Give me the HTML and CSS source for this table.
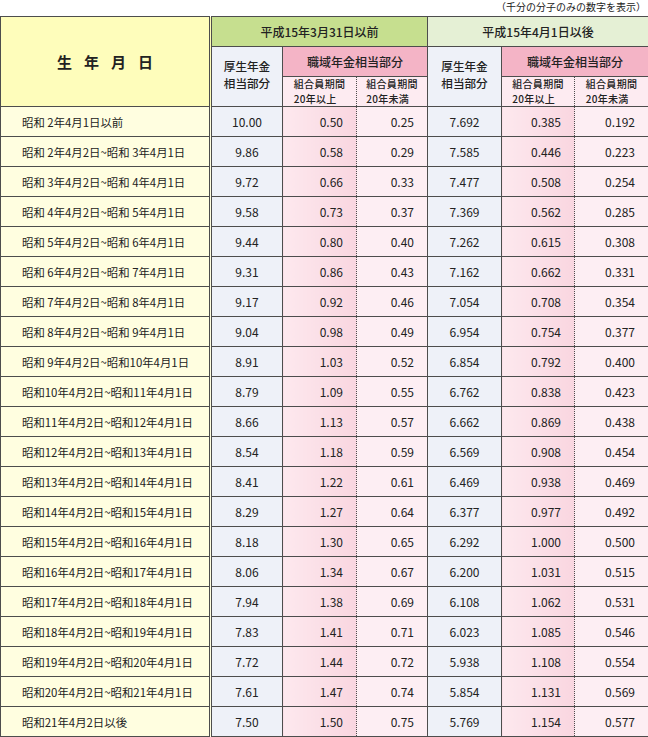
FILE: index.html
```html
<!DOCTYPE html>
<html lang="ja">
<head>
<meta charset="utf-8">
<title>支給率表</title>
<link rel="stylesheet" href="styles.css">
</head>
<body>
<p class="note">（千分の分子のみの数字を表示）</p>
<table class="rates">
<colgroup>
<col class="c-birth"><col class="c-k"><col class="c-a"><col class="c-b"><col class="c-k2"><col class="c-a2"><col class="c-b2">
</colgroup>
<thead>
<tr class="h1">
<th rowspan="3" class="birth">生年月日</th>
<th colspan="3" class="era1">平成15年3月31日以前</th>
<th colspan="3" class="era2">平成15年4月1日以後</th>
</tr>
<tr class="h2">
<th rowspan="2" class="kosei">厚生年金<br>相当部分</th>
<th colspan="2" class="shoku">職域年金相当部分</th>
<th rowspan="2" class="kosei">厚生年金<br>相当部分</th>
<th colspan="2" class="shoku">職域年金相当部分</th>
</tr>
<tr class="h3">
<th class="sub a"><span>組合員期間<br>20年以上</span></th>
<th class="sub b"><span>組合員期間<br>20年未満</span></th>
<th class="sub a"><span>組合員期間<br>20年以上</span></th>
<th class="sub b"><span>組合員期間<br>20年未満</span></th>
</tr>
</thead>
<tbody>
<tr><td class="date">昭和 2年4月1日以前</td><td class="k">10.00</td><td class="a">0.50</td><td class="b">0.25</td><td class="k">7.692</td><td class="a">0.385</td><td class="b">0.192</td></tr>
<tr><td class="date">昭和 2年4月2日~昭和 3年4月1日</td><td class="k">9.86</td><td class="a">0.58</td><td class="b">0.29</td><td class="k">7.585</td><td class="a">0.446</td><td class="b">0.223</td></tr>
<tr><td class="date">昭和 3年4月2日~昭和 4年4月1日</td><td class="k">9.72</td><td class="a">0.66</td><td class="b">0.33</td><td class="k">7.477</td><td class="a">0.508</td><td class="b">0.254</td></tr>
<tr><td class="date">昭和 4年4月2日~昭和 5年4月1日</td><td class="k">9.58</td><td class="a">0.73</td><td class="b">0.37</td><td class="k">7.369</td><td class="a">0.562</td><td class="b">0.285</td></tr>
<tr><td class="date">昭和 5年4月2日~昭和 6年4月1日</td><td class="k">9.44</td><td class="a">0.80</td><td class="b">0.40</td><td class="k">7.262</td><td class="a">0.615</td><td class="b">0.308</td></tr>
<tr><td class="date">昭和 6年4月2日~昭和 7年4月1日</td><td class="k">9.31</td><td class="a">0.86</td><td class="b">0.43</td><td class="k">7.162</td><td class="a">0.662</td><td class="b">0.331</td></tr>
<tr><td class="date">昭和 7年4月2日~昭和 8年4月1日</td><td class="k">9.17</td><td class="a">0.92</td><td class="b">0.46</td><td class="k">7.054</td><td class="a">0.708</td><td class="b">0.354</td></tr>
<tr><td class="date">昭和 8年4月2日~昭和 9年4月1日</td><td class="k">9.04</td><td class="a">0.98</td><td class="b">0.49</td><td class="k">6.954</td><td class="a">0.754</td><td class="b">0.377</td></tr>
<tr><td class="date">昭和 9年4月2日~昭和10年4月1日</td><td class="k">8.91</td><td class="a">1.03</td><td class="b">0.52</td><td class="k">6.854</td><td class="a">0.792</td><td class="b">0.400</td></tr>
<tr><td class="date">昭和10年4月2日~昭和11年4月1日</td><td class="k">8.79</td><td class="a">1.09</td><td class="b">0.55</td><td class="k">6.762</td><td class="a">0.838</td><td class="b">0.423</td></tr>
<tr><td class="date">昭和11年4月2日~昭和12年4月1日</td><td class="k">8.66</td><td class="a">1.13</td><td class="b">0.57</td><td class="k">6.662</td><td class="a">0.869</td><td class="b">0.438</td></tr>
<tr><td class="date">昭和12年4月2日~昭和13年4月1日</td><td class="k">8.54</td><td class="a">1.18</td><td class="b">0.59</td><td class="k">6.569</td><td class="a">0.908</td><td class="b">0.454</td></tr>
<tr><td class="date">昭和13年4月2日~昭和14年4月1日</td><td class="k">8.41</td><td class="a">1.22</td><td class="b">0.61</td><td class="k">6.469</td><td class="a">0.938</td><td class="b">0.469</td></tr>
<tr><td class="date">昭和14年4月2日~昭和15年4月1日</td><td class="k">8.29</td><td class="a">1.27</td><td class="b">0.64</td><td class="k">6.377</td><td class="a">0.977</td><td class="b">0.492</td></tr>
<tr><td class="date">昭和15年4月2日~昭和16年4月1日</td><td class="k">8.18</td><td class="a">1.30</td><td class="b">0.65</td><td class="k">6.292</td><td class="a">1.000</td><td class="b">0.500</td></tr>
<tr><td class="date">昭和16年4月2日~昭和17年4月1日</td><td class="k">8.06</td><td class="a">1.34</td><td class="b">0.67</td><td class="k">6.200</td><td class="a">1.031</td><td class="b">0.515</td></tr>
<tr><td class="date">昭和17年4月2日~昭和18年4月1日</td><td class="k">7.94</td><td class="a">1.38</td><td class="b">0.69</td><td class="k">6.108</td><td class="a">1.062</td><td class="b">0.531</td></tr>
<tr><td class="date">昭和18年4月2日~昭和19年4月1日</td><td class="k">7.83</td><td class="a">1.41</td><td class="b">0.71</td><td class="k">6.023</td><td class="a">1.085</td><td class="b">0.546</td></tr>
<tr><td class="date">昭和19年4月2日~昭和20年4月1日</td><td class="k">7.72</td><td class="a">1.44</td><td class="b">0.72</td><td class="k">5.938</td><td class="a">1.108</td><td class="b">0.554</td></tr>
<tr><td class="date">昭和20年4月2日~昭和21年4月1日</td><td class="k">7.61</td><td class="a">1.47</td><td class="b">0.74</td><td class="k">5.854</td><td class="a">1.131</td><td class="b">0.569</td></tr>
<tr><td class="date">昭和21年4月2日以後</td><td class="k">7.50</td><td class="a">1.50</td><td class="b">0.75</td><td class="k">5.769</td><td class="a">1.154</td><td class="b">0.577</td></tr>
</tbody>
</table>
</body>
</html>
```
FILE: styles.css
```css
html, body {
  margin: 0;
  padding: 0;
  background: #ffffff;
}
body {
  font-family: "Noto Sans CJK JP", "Noto Sans", sans-serif;
  color: #222222;
  width: 648px;
}
.note {
  margin: 0;
  height: 16px;
  font-size: 10px;
  line-height: 13px;
  text-align: right;
  padding-right: 2px;
  box-sizing: border-box;
  color: #222222;
}
.rates {
  border-collapse: collapse;
  table-layout: fixed;
  width: 648px;
}
.c-birth { width: 210px; }
.c-k { width: 72px; }
.c-a { width: 74px; }
.c-b { width: 71px; }
.c-k2 { width: 74px; }
.c-a2 { width: 73px; }
.c-b2 { width: 74px; }

.rates th, .rates td {
  border: 1px solid #4d4d4d;
  padding: 0;
  height: 30px;
  box-sizing: border-box;
}
.rates th {
  font-size: 12px;
  font-weight: 500;
  line-height: 14px;
  text-align: center;
}
.rates .birth {
  background: #fefdbb;
  border-right: 3px double #4d4d4d;
  font-size: 15px;
  font-weight: 700;
  letter-spacing: 12px;
  text-indent: 12px;
}
.era1 { background: #c6df8f; }
.era2 { background: #e5f0d5; }
.rates .kosei {
  background: #eef1f8;
  font-size: 11.6px;
  line-height: 16.9px;
  padding-bottom: 3px;
}
.shoku { background: #f4b4c6; }
.rates .sub {
  background: #fdebf1;
  font-size: 10px;
  font-weight: 500;
  line-height: 14.5px;
}
.sub span {
  display: inline-block;
  text-align: left;
  letter-spacing: 0.3px;
}
.rates .a { border-right-style: dotted; }
.rates .b { border-left-style: dotted; }

.rates td {
  font-size: 12px;
  line-height: 14px;
}
.rates td.date {
  background: #fffee0;
  border-right: 3px double #4d4d4d;
  font-size: 11.4px;
  padding-left: 21px;
  white-space: nowrap;
}
.rates td.k {
  background: #eef1f8;
  text-align: center;
}
.rates td.a {
  background: linear-gradient(to right, #fde8ee, #f9d6e0);
  text-align: right;
  padding-right: 13px;
}
.rates td.b {
  background: #fdeef3;
  text-align: right;
  padding-right: 13px;
}
```
